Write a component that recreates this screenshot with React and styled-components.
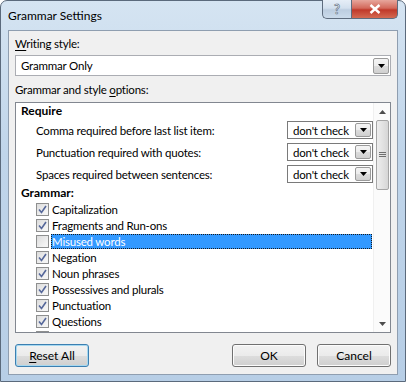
import React from "react";
import styled, { createGlobalStyle } from "styled-components";

const Global = createGlobalStyle`
  html, body { margin: 0; padding: 0; background: #ffffff; }
  body { font-family: Lato, "Noto Sans", sans-serif; font-size: 11.5px; letter-spacing: -0.2px; color: #000; }
  * { box-sizing: border-box; }
`;

const Frame = styled.div`
  width: 406px;
  height: 382px;
  display: flex;
  flex-direction: column;
  padding: 0 7px 6px;
  border: 1px solid #5b6a7c;
  border-radius: 7px 7px 0 0;
  background: linear-gradient(180deg, #d5e4f2 0%, #c0d5ea 40%, #b7cee6 100%);
`;

const TitleBar = styled.div`
  height: 29px;
  display: flex;
  align-items: flex-start;
  justify-content: space-between;
`;

const Title = styled.div`
  padding: 7px 0 0 0;
  font-size: 12px;
  letter-spacing: 0;
  color: #000;
`;

const Caption = styled.div`
  display: flex;
  margin-top: -1px;
`;

const CaptionButton = styled.div`
  height: 19px;
  width: ${(p) => p.w}px;
  display: flex;
  align-items: center;
  justify-content: center;
  border: 1px solid #5e6c7e;
  border-top: none;
  ${(p) =>
    p.close
      ? `background: linear-gradient(180deg, #e7a69c 0%, #d3695b 45%, #c0392a 55%, #d46a52 100%);
         border-radius: 0 0 5px 0;`
      : `background: linear-gradient(180deg, #e6eef7 0%, #d3e0ee 45%, #bccde0 55%, #cbdbeb 100%);
         border-right: none;
         border-radius: 0 0 0 5px;`}
`;

const HelpGlyph = styled.span`
  color: #eef3f8;
  font-weight: bold;
  font-size: 13px;
  -webkit-text-stroke: 0.6px #56667a;
`;

const Client = styled.div`
  flex: 1;
  display: flex;
  flex-direction: column;
  background: #f0f0f0;
  border: 1px solid #8f9eb0;
  padding: 5px 6px 0;
`;

const Label = styled.div`
  height: 16px;
  line-height: 16px;
  margin-bottom: ${(p) => p.gap || 3}px;
`;

const Key = styled.span`
  text-decoration: underline;
  text-underline-offset: 2px;
`;

const Combo = styled.div`
  height: ${(p) => p.h || 21}px;
  width: ${(p) => (p.w ? `${p.w}px` : "auto")};
  display: flex;
  align-items: center;
  background: #fff;
  border: 1px solid ${(p) => (p.dark ? "#7a7a7a" : "#abadb3")};
  padding: 0 1px 0 5px;
  margin-bottom: ${(p) => p.mb || 0}px;
`;

const ComboText = styled.div`
  flex: 1;
  white-space: nowrap;
`;

const DropButton = styled.div`
  width: ${(p) => p.w || 16}px;
  height: ${(p) => p.h || 15}px;
  display: flex;
  align-items: center;
  justify-content: center;
  border: 1px solid #9a9a9a;
  border-radius: 2px;
  background: linear-gradient(180deg, #f4f4f4 0%, #ececec 50%, #dcdcdc 51%, #d0d0d0 100%);
`;

const ListBox = styled.div`
  height: 231px;
  display: flex;
  background: #fff;
  border: 1px solid #828790;
  overflow: hidden;
`;

const ListItems = styled.div`
  flex: 1;
  overflow: hidden;
  padding-left: 5px;
`;

const Heading = styled.div`
  height: 16px;
  line-height: 16px;
  font-weight: bold;
  font-size: 12px;
  letter-spacing: 0;
`;

const OptionRow = styled.div`
  height: 22px;
  display: flex;
  align-items: center;
  padding-left: 15px;
`;

const OptionLabel = styled.div`
  flex: 1;
`;

const CheckRow = styled.div`
  height: 16px;
  display: flex;
  align-items: center;
  padding-left: 15px;
`;

const Box = styled.div`
  width: 13px;
  height: 13px;
  border: 1px solid #8e8f8f;
  background: linear-gradient(135deg, #dcdcdc 0%, #f4f4f4 80%);
  padding: 1px;
  display: flex;
  align-items: center;
  justify-content: center;
  margin-right: 2px;
`;

const ItemText = styled.div`
  height: 15px;
  line-height: 15px;
  flex: 1;
  padding: 0 1px;
  margin-right: 1px;
  ${(p) =>
    p.selected
      ? `background: #3399ff; color: #fff; outline: 1px dotted #1a1a1a; outline-offset: -1px;`
      : ``}
`;

const ScrollBar = styled.div`
  width: 17px;
  display: flex;
  flex-direction: column;
  align-items: center;
  background: #fbfbfb;
  border-left: 1px solid #f0f0f0;
`;

const Arrow = styled.div`
  height: 17px;
  display: flex;
  align-items: center;
  justify-content: center;
`;

const Thumb = styled.div`
  width: 13px;
  height: 70px;
  border: 1px solid #a5a5a5;
  border-radius: 2px;
  background: linear-gradient(90deg, #eeeeee 0%, #e2e2e2 50%, #d6d6d6 100%);
  display: flex;
  align-items: center;
  justify-content: center;
`;

const Track = styled.div`
  flex: 1;
`;

const Buttons = styled.div`
  display: flex;
  align-items: center;
  gap: 11px;
  margin-top: 11px;
`;

const Button = styled.div`
  width: 74px;
  height: 23px;
  display: flex;
  align-items: center;
  justify-content: center;
  font-size: 12px;
  letter-spacing: 0;
  border: 1px solid ${(p) => (p.focus ? "#3c7fb1" : "#707070")};
  border-radius: 3px;
  background: linear-gradient(180deg, #f2f2f2 0%, #ebebeb 50%, #dddddd 51%, #cfcfcf 100%);
  box-shadow: inset 0 0 0 1px ${(p) => (p.focus ? "#a6d8f0" : "#fcfcfc")};
  margin-right: ${(p) => (p.push ? "auto" : "0")};
`;

const Tri = ({ size = 7, color = "#000" }) => (
  <svg width={size} height={Math.ceil(size / 2)} viewBox="0 0 7 4">
    <path d="M0 0H7L3.5 4Z" fill={color} />
  </svg>
);

const UpTri = () => (
  <svg width="7" height="4" viewBox="0 0 7 4">
    <path d="M0 4H7L3.5 0Z" fill="#4d4d4d" />
  </svg>
);

const Grip = () => (
  <svg width="7" height="6" viewBox="0 0 7 6">
    <path d="M0 .5H7M0 2.5H7M0 4.5H7" stroke="#6f6f6f" strokeWidth="1" />
  </svg>
);

const Check = () => (
  <svg width="9" height="9" viewBox="0 0 9 9">
    <path d="M1 4.5L3.5 7.5L8 1" fill="none" stroke="#55679a" strokeWidth="1.6" />
  </svg>
);

const options = [
  "Comma required before last list item:",
  "Punctuation required with quotes:",
  "Spaces required between sentences:",
];

const checks = [
  { label: "Capitalization", on: true },
  { label: "Fragments and Run-ons", on: true },
  { label: "Misused words", on: false, selected: true },
  { label: "Negation", on: true },
  { label: "Noun phrases", on: true },
  { label: "Possessives and plurals", on: true },
  { label: "Punctuation", on: true },
  { label: "Questions", on: true },
];

export default function App() {
  return (
    <>
      <Global />
      <Frame>
        <TitleBar>
          <Title>Grammar Settings</Title>
          <Caption>
            <CaptionButton w={29}>
              <HelpGlyph>?</HelpGlyph>
            </CaptionButton>
            <CaptionButton w={47} close>
              <svg width="12" height="10" viewBox="0 0 12 10">
                <path d="M1.5 1L10.5 9M10.5 1L1.5 9" stroke="#fff" strokeWidth="2.4" />
              </svg>
            </CaptionButton>
          </Caption>
        </TitleBar>
        <Client>
          <Label>
            <Key>W</Key>riting style:
          </Label>
          <Combo mb={6}>
            <ComboText>Grammar Only</ComboText>
            <DropButton w={16} h={16}>
              <Tri />
            </DropButton>
          </Combo>
          <Label gap={4}>
            Grammar and style <Key>o</Key>ptions:
          </Label>
          <ListBox>
            <ListItems>
              <Heading>Require</Heading>
              {options.map((o) => (
                <OptionRow key={o}>
                  <OptionLabel>{o}</OptionLabel>
                  <Combo w={86} h={18} dark>
                    <ComboText>don't check</ComboText>
                    <DropButton w={16} h={14}>
                      <Tri />
                    </DropButton>
                  </Combo>
                </OptionRow>
              ))}
              <Heading>Grammar:</Heading>
              {checks.map((c) => (
                <CheckRow key={c.label}>
                  <Box>{c.on && <Check />}</Box>
                  <ItemText selected={c.selected}>{c.label}</ItemText>
                </CheckRow>
              ))}
              <CheckRow>
                <Box>
                  <Check />
                </Box>
              </CheckRow>
            </ListItems>
            <ScrollBar>
              <Arrow>
                <UpTri />
              </Arrow>
              <Thumb>
                <Grip />
              </Thumb>
              <Track />
              <Arrow>
                <Tri color="#4d4d4d" />
              </Arrow>
            </ScrollBar>
          </ListBox>
          <Buttons>
            <Button focus push>
              <span>
                <Key>R</Key>eset All
              </span>
            </Button>
            <Button>OK</Button>
            <Button>Cancel</Button>
          </Buttons>
        </Client>
      </Frame>
    </>
  );
}
